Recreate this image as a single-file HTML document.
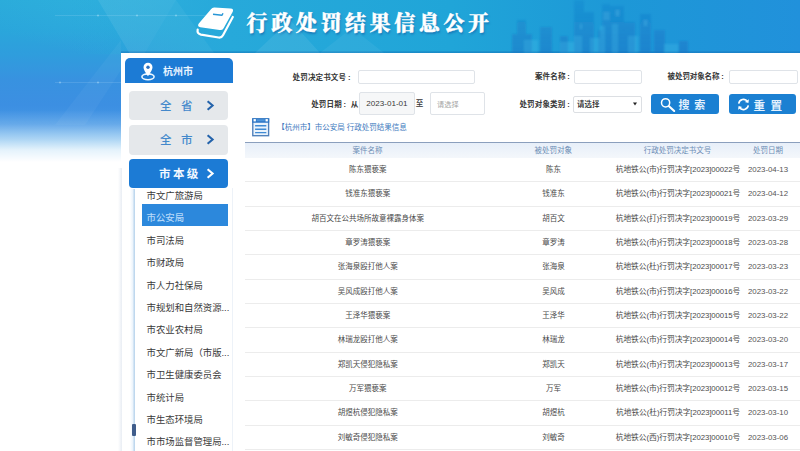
<!DOCTYPE html>
<html lang="zh-CN">
<head>
<meta charset="utf-8">
<title>行政处罚结果信息公开</title>
<style>
*{box-sizing:border-box;margin:0;padding:0}
html,body{width:800px;height:451px;overflow:hidden;background:#fff}
body{position:relative;font-family:"Liberation Sans","Noto Sans CJK SC",sans-serif;color:#444;font-size:7.6px}
.abs{position:absolute}
#bg{left:0;top:0;width:800px;height:200px;
 background:
  linear-gradient(to bottom,rgba(255,255,255,0) 0,rgba(255,255,255,0) 110px,rgba(255,255,255,.18) 124px,rgba(255,255,255,.55) 140px,rgba(255,255,255,.84) 150px,#fff 162px),
  linear-gradient(to bottom,rgba(20,110,180,0) 0,rgba(20,110,180,0) 50.500px,rgba(20,110,180,.45) 52px,rgba(20,110,180,.45) 53px,rgba(20,110,180,0) 53.100px) 121px 0/679px 54px no-repeat,
  linear-gradient(to right,rgba(38,168,218,0) 70px,#27a9da 230px,#20a5d8 450px,#1d98d7 620px,#2191db 800px) 0 0/800px 54px no-repeat,
  radial-gradient(ellipse 200px 60px at 170px 0,rgba(70,200,235,.22),rgba(70,200,235,0)),
  linear-gradient(to bottom,#2aabda 0,#2aa6db 30px,#2f9ddd 55px,#3892e0 80px,#3c8fe2 105px,#4597e5 125px,#58b0ea 150px,#60b4ec 170px);}
#panel{left:121px;top:53px;width:679px;height:398px;background:#fff}
#title{left:246.6px;top:8.6px;height:28px;line-height:28px;font-family:"Liberation Serif","Noto Serif CJK SC",serif;font-weight:900;font-size:21px;letter-spacing:3.6px;color:#fff;white-space:nowrap;text-shadow:1px 1.5px 2px rgba(20,90,160,.55);-webkit-text-stroke:.4px #fff}
/* sidebar */
#city{left:125px;top:58px;width:107.5px;height:25px;background:#1c7bd5;border-radius:5px 5px 0 0;color:#e8f3ff;font-weight:bold;font-size:10px;line-height:25px}
#city span{position:absolute;left:38px;top:0.5px;letter-spacing:0}
.gbtn{left:129px;width:99px;height:29.5px;border-radius:4px;background:#e5e8eb;color:#4388cb;font-weight:500;font-size:11.5px;line-height:31px}
.gbtn .t{position:absolute;left:31px;top:0;white-space:nowrap}
.gbtn svg{position:absolute;left:77px;top:9.3px}
#lvl{background:#1c7bd5;color:#f2f8ff;font-weight:bold}
.li{left:141.5px;width:86.5px;height:22px;line-height:22px;font-size:9.4px;color:#3a3a3a;padding-left:5px;white-space:nowrap}
.li.sel{background:#2c88dc;color:#b6d8f9;font-weight:500;height:21.8px;line-height:28.2px;overflow:hidden}
#track{left:130px;top:189px;width:5px;height:262px;background:linear-gradient(to right,rgba(215,232,248,0),rgba(215,232,248,.6) 3.4px,#bfd8ee 3.6px,#bfd8ee 5px)}
#thumb{left:132px;top:424px;width:4px;height:12px;background:#3e5c8b;border-radius:1px}
/* form */
.lb{color:#363636;font-weight:bold;font-size:7.5px;letter-spacing:.15px;white-space:nowrap;text-align:right;height:12px;line-height:12px}
.lb i{font-style:normal;margin-left:1.8px}
.inp{border:1px solid #dfe3e8;border-radius:2px;background:#fff}
.btn{top:94.3px;height:20px;border-radius:3px;background:#1b80d2;color:#e4f1fd;font-weight:bold;font-size:11px;line-height:19.6px}
/* table */
#hline{left:245px;top:141.8px;width:555px;height:1.8px;background:#8b9fbd}
#thead{left:245px;top:143.4px;width:555px;height:14.2px;background:linear-gradient(to bottom,#e7eff9,#f4f7fb)}
.th{top:145.1px;height:12px;line-height:12px;color:#6c8db5;font-size:7.5px;white-space:nowrap;transform:translateX(-50%)}
.row{left:245px;width:555px;height:24.33px;border-bottom:1px solid #ececec}
.row div{position:absolute;top:0;height:24.33px;line-height:24.33px;white-space:nowrap;transform:translateX(-50%);font-size:7.5px;color:#4a4a4a}
.row .c1{left:122.8px}.row .c2{left:308.6px}
.row .c3{left:433px;font-size:7.75px;letter-spacing:-.05px}.row .c4{left:523px;font-size:7.85px;color:#555}
</style>
</head>
<body>
<div id="bg" class="abs"></div>
<svg class="abs" style="left:0;top:0" width="800" height="170" viewBox="0 0 800 170">
 <defs>
  <linearGradient id="sk" x1="0" y1="0" x2="0" y2="1"><stop offset="0" stop-color="#1668c0" stop-opacity=".16"/><stop offset="1" stop-color="#1668c0" stop-opacity=".4"/></linearGradient>
  <filter id="bl" x="-5%" y="-20%" width="110%" height="140%"><feGaussianBlur stdDeviation=".9"/></filter>
 </defs>
 <!-- facets -->
 <g opacity=".07" fill="#fff">
  <path d="M98 0H176L137 66Z"/><path d="M176 0L214 53H137Z" opacity=".6"/>
  <path d="M255 53L290 20 320 53Z"/><path d="M320 53L352 28 384 53Z" opacity=".7"/>
 </g>
 <g opacity=".04" fill="#fff"><path d="M121 70L85 125H55L121 40Z"/></g>
 <!-- skyline -->
 <g filter="url(#bl)">
  <path fill="url(#sk)" d="M512 53V34h5V20h9v14h6v19zM540 53V27h12v26zM560 53V36h8v17zM574 53V0h10v12h10v41zM598 53V30h4V4h8v2h14v16h11v31zM640 53V14h11v39zM654 53V30h11v23zM679 53V41h9v12z"/>
  <path fill="#56ccf2" opacity=".22" d="M524 53V40h14v13zM560 53V42h14v-6h8v17zM590 53V38h10v-12h5v27zM612 53V24h6v29zM628 53V36h10v17zM664 53V44h14v9z"/>
  <path fill="#7fdcf8" opacity=".2" d="M580 24h2v5h-2zM604 12h2v8h-2zM607 12h2v8h-2zM616 10h3v6h-3zM644 20h3v6h-3z"/>
 </g>
 <!-- lines and dots -->
 <g stroke="#c8eefc" stroke-width=".7" opacity=".22" fill="none">
  <path d="M55 15.5H232M55 82.500H121"/>
 </g>
 <g fill="#d4f2fd" opacity=".35"><circle cx="98" cy="15.500" r="1.100"/><circle cx="137" cy="15.500" r="1.100"/><circle cx="176" cy="15.500" r="1.100"/><circle cx="60" cy="82.500" r="1.100"/><circle cx="98" cy="82.500" r="1.100"/></g>
</svg>
<div id="title" class="abs">行政处罚结果信息公开</div>
<!-- book icon -->
<svg class="abs" style="left:190px;top:0" width="60" height="46" viewBox="190 0 60 46">
 <path d="M214.4 7.6 L230.6 8.4 Q234.2 8.8 232.6 12 L223.6 28.2 Q222.4 30.4 219.6 30 L200.4 27.2 Q196.8 26.4 198.8 23.4 L211 9.2 Q212.2 7.5 214.4 7.6 Z" fill="#fff"/>
 <path d="M213 14.2 L222 15.2 L223 13.2" fill="none" stroke="#2796d6" stroke-width="1.4" stroke-linejoin="round"/>
 <path d="M197.7 29.6 Q196.8 33.8 201 34.6 L218.6 37.5 Q221.6 37.9 223 35.2 L232.8 17" fill="none" stroke="#fff" stroke-width="2.2" stroke-linecap="round" stroke-linejoin="round"/>
</svg>
<div id="panel" class="abs"></div>

<!-- sidebar -->
<div id="city" class="abs">
 <svg class="abs" style="left:15.4px;top:3.8px" width="16" height="19" viewBox="0 0 16 19">
  <ellipse cx="8" cy="14.8" rx="6.1" ry="2.9" fill="none" stroke="#eaf6ff" stroke-width="1.6"/>
  <path d="M8 .8 A4.500 4.500 0 0 1 12.500 5.300 C12.500 8.400 8 14.200 8 14.200 C8 14.200 3.500 8.400 3.500 5.300 A4.500 4.500 0 0 1 8 .8 Z" fill="#fff"/>
  <circle cx="8" cy="5.200" r="1.700" fill="#2a6fc0"/>
 </svg>
 <span>杭州市</span>
</div>
<div class="abs gbtn" style="top:90.5px"><span class="t">全&nbsp;&nbsp;&nbsp;省</span>
 <svg width="9" height="11" viewBox="0 0 9 11"><path d="M1.6 1.2 L6.6 5.5 L1.6 9.8" fill="none" stroke="#2463ab" stroke-width="2.1"/></svg></div>
<div class="abs gbtn" style="top:125px"><span class="t">全&nbsp;&nbsp;&nbsp;市</span>
 <svg width="9" height="11" viewBox="0 0 9 11"><path d="M1.6 1.2 L6.6 5.5 L1.6 9.8" fill="none" stroke="#2463ab" stroke-width="2.1"/></svg></div>
<div id="lvl" class="abs gbtn" style="top:158.5px"><span class="t" style="left:30px;letter-spacing:2.4px">市本级</span>
 <svg width="9" height="11" viewBox="0 0 9 11"><path d="M1.6 1.2 L6.6 5.5 L1.6 9.8" fill="none" stroke="#fff" stroke-width="2.1"/></svg></div>
<div class="abs" style="left:118px;top:168px;width:3.5px;height:283px;background:linear-gradient(to right,rgba(225,231,240,0),rgba(225,231,240,.75))"></div>
<div id="track" class="abs"></div>
<div id="thumb" class="abs"></div>
<div class="abs" style="left:231.5px;top:188px;width:1px;height:263px;background:#edf2f8"></div>
<div class="abs li" style="top:185px">市文广旅游局</div>
<div class="abs li sel" style="top:204.3px">市公安局</div>
<div class="abs li" style="top:229.8px">市司法局</div>
<div class="abs li" style="top:252.2px">市财政局</div>
<div class="abs li" style="top:274.6px">市人力社保局</div>
<div class="abs li" style="top:297px">市规划和自然资源...</div>
<div class="abs li" style="top:319.4px">市农业农村局</div>
<div class="abs li" style="top:341.8px">市文广新局（市版...</div>
<div class="abs li" style="top:364.2px">市卫生健康委员会</div>
<div class="abs li" style="top:386.6px">市统计局</div>
<div class="abs li" style="top:409px">市生态环境局</div>
<div class="abs li" style="top:431.4px">市市场监督管理局...</div>

<!-- form -->
<div class="abs lb" style="left:270px;width:80.6px;top:72px">处罚决定书文号<i>:</i></div>
<div class="abs inp" style="left:357.5px;top:69.5px;width:117px;height:14px"></div>
<div class="abs lb" style="left:500px;width:70px;top:71.4px">案件名称<i>:</i></div>
<div class="abs inp" style="left:574px;top:69.5px;width:68px;height:14px"></div>
<div class="abs lb" style="left:640px;width:83.6px;top:71.4px;letter-spacing:-.1px">被处罚对象名称<i>:</i></div>
<div class="abs inp" style="left:728.5px;top:69.5px;width:69px;height:14px"></div>

<div class="abs lb" style="left:290px;width:68.4px;top:98.8px">处罚日期<i>:</i>&nbsp;&nbsp;从</div>
<div class="abs inp" style="left:359px;top:92px;width:56px;height:23px;background:#f6f7f8;color:#3a3a3a;font-size:8.1px;line-height:22.6px;padding-left:6.2px">2023-01-01</div>
<div class="abs lb" style="left:415.8px;width:12px;top:97.5px;text-align:left;font-weight:500">至</div>
<div class="abs inp" style="left:429.6px;top:92px;width:55px;height:23px;color:#a4a4a4;font-size:7.2px;line-height:23.6px;padding-left:6.5px">请选择</div>
<div class="abs lb" style="left:500px;width:69.8px;top:98.8px">处罚对象类别<i>:</i></div>
<div class="abs inp" style="left:573.4px;top:95.6px;width:68.6px;height:17.8px;color:#222;font-weight:500;font-size:7.5px;line-height:16.4px;padding-left:2.6px;border-color:#dcdfe3">请选择<svg class="abs" style="right:3.6px;top:5.8px" width="4" height="4" viewBox="0 0 4 4"><path d="M0 .6H4L2 3.6Z" fill="#222"/></svg></div>

<div class="abs btn" style="left:651.2px;width:67.6px">
 <svg class="abs" style="left:8.2px;top:1.3px" width="18" height="18" viewBox="0 0 18 18"><circle cx="6.6" cy="6.8" r="4.1" fill="none" stroke="#fff" stroke-width="1.5"/><path d="M10 10.2 L15.2 15" stroke="#fff" stroke-width="2.1" stroke-linecap="round"/></svg>
 <span class="abs" style="left:27.2px;top:1.8px;white-space:nowrap;letter-spacing:5px">搜索</span></div>
<div class="abs btn" style="left:728.8px;width:66.8px">
 <svg class="abs" style="left:8.2px;top:3.3px" width="13" height="13" viewBox="0 0 13 13"><path d="M1.7 5.6 A4.9 4.9 0 0 1 10.6 3.6" fill="none" stroke="#fff" stroke-width="1.6"/><path d="M11.3 7.4 A4.9 4.9 0 0 1 2.4 9.4" fill="none" stroke="#fff" stroke-width="1.6"/><path d="M11.9 1.2 L11.4 5 L7.8 3.9 Z" fill="#fff"/><path d="M1.1 11.8 L1.6 8 L5.2 9.1 Z" fill="#fff"/></svg>
 <span class="abs" style="left:24.6px;top:1.6px;white-space:nowrap;letter-spacing:5.6px;font-size:11.6px">重置</span></div>

<!-- breadcrumb -->
<svg class="abs" style="left:252.2px;top:118.4px" width="17.4" height="18.6" viewBox="0 0 18 19">
 <rect x=".8" y=".8" width="16.4" height="17.4" fill="#eaf3fc" stroke="#4d7fbb" stroke-width="1.4"/>
 <rect x=".2" y=".2" width="17.6" height="4.6" fill="#2f77c6"/>
 <rect x="4.8" y="1.2" width="8.4" height="2" fill="#4e95dc"/>
 <rect x="1.6" y="1" width="2.4" height="2.4" fill="#fff"/><rect x="14" y="1" width="2.4" height="2.4" fill="#fff"/>
 <path d="M3.2 8H14.8M3.2 11.5H14.8M3.2 15H14.8" stroke="#3f8ad4" stroke-width="1.5"/>
</svg>
<div class="abs" style="left:277.2px;top:121.9px;height:12px;line-height:12px;font-size:7.5px;color:#3f7cc0;white-space:nowrap">【杭州市】市公安局 行政处罚结果信息</div>

<!-- table -->
<div id="hline" class="abs"></div>
<div id="thead" class="abs"></div>
<div class="abs th" style="left:367.5px">案件名称</div>
<div class="abs th" style="left:553.3px">被处罚对象</div>
<div class="abs th" style="left:677.5px">行政处罚决定书文号</div>
<div class="abs th" style="left:768px">处罚日期</div>

<div class="abs row" style="top:157.95px"><div class="c1">陈东猥亵案</div><div class="c2">陈东</div><div class="c3">杭地铁公(市)行罚决字[2023]00022号</div><div class="c4">2023-04-13</div></div>
<div class="abs row" style="top:182.29px"><div class="c1">钱准东猥亵案</div><div class="c2">钱准东</div><div class="c3">杭地铁公(市)行罚决字[2023]00021号</div><div class="c4">2023-04-12</div></div>
<div class="abs row" style="top:206.63px"><div class="c1">胡百文在公共场所故意裸露身体案</div><div class="c2">胡百文</div><div class="c3">杭地铁公(打)行罚决字[2023]00019号</div><div class="c4">2023-03-29</div></div>
<div class="abs row" style="top:230.97px"><div class="c1">章罗涛猥亵案</div><div class="c2">章罗涛</div><div class="c3">杭地铁公(市)行罚决字[2023]00018号</div><div class="c4">2023-03-28</div></div>
<div class="abs row" style="top:255.31px"><div class="c1">张海泉殴打他人案</div><div class="c2">张海泉</div><div class="c3">杭地铁公(杜)行罚决字[2023]00017号</div><div class="c4">2023-03-23</div></div>
<div class="abs row" style="top:279.65px"><div class="c1">吴风成殴打他人案</div><div class="c2">吴风成</div><div class="c3">杭地铁公(市)行罚决字[2023]00016号</div><div class="c4">2023-03-22</div></div>
<div class="abs row" style="top:303.99px"><div class="c1">王泽华猥亵案</div><div class="c2">王泽华</div><div class="c3">杭地铁公(市)行罚决字[2023]00015号</div><div class="c4">2023-03-22</div></div>
<div class="abs row" style="top:328.33px"><div class="c1">林瑞龙殴打他人案</div><div class="c2">林瑞龙</div><div class="c3">杭地铁公(市)行罚决字[2023]00014号</div><div class="c4">2023-03-20</div></div>
<div class="abs row" style="top:352.67px"><div class="c1">郑凯天侵犯隐私案</div><div class="c2">郑凯天</div><div class="c3">杭地铁公(市)行罚决字[2023]00013号</div><div class="c4">2023-03-17</div></div>
<div class="abs row" style="top:377.01px"><div class="c1">万军猥亵案</div><div class="c2">万军</div><div class="c3">杭地铁公(市)行罚决字[2023]00012号</div><div class="c4">2023-03-15</div></div>
<div class="abs row" style="top:401.35px"><div class="c1">胡煜杭侵犯隐私案</div><div class="c2">胡煜杭</div><div class="c3">杭地铁公(杜)行罚决字[2023]00011号</div><div class="c4">2023-03-10</div></div>
<div class="abs row" style="top:425.69px"><div class="c1">刘敏奇侵犯隐私案</div><div class="c2">刘敏奇</div><div class="c3">杭地铁公(西)行罚决字[2023]00010号</div><div class="c4">2023-03-06</div></div>
</body>
</html>
